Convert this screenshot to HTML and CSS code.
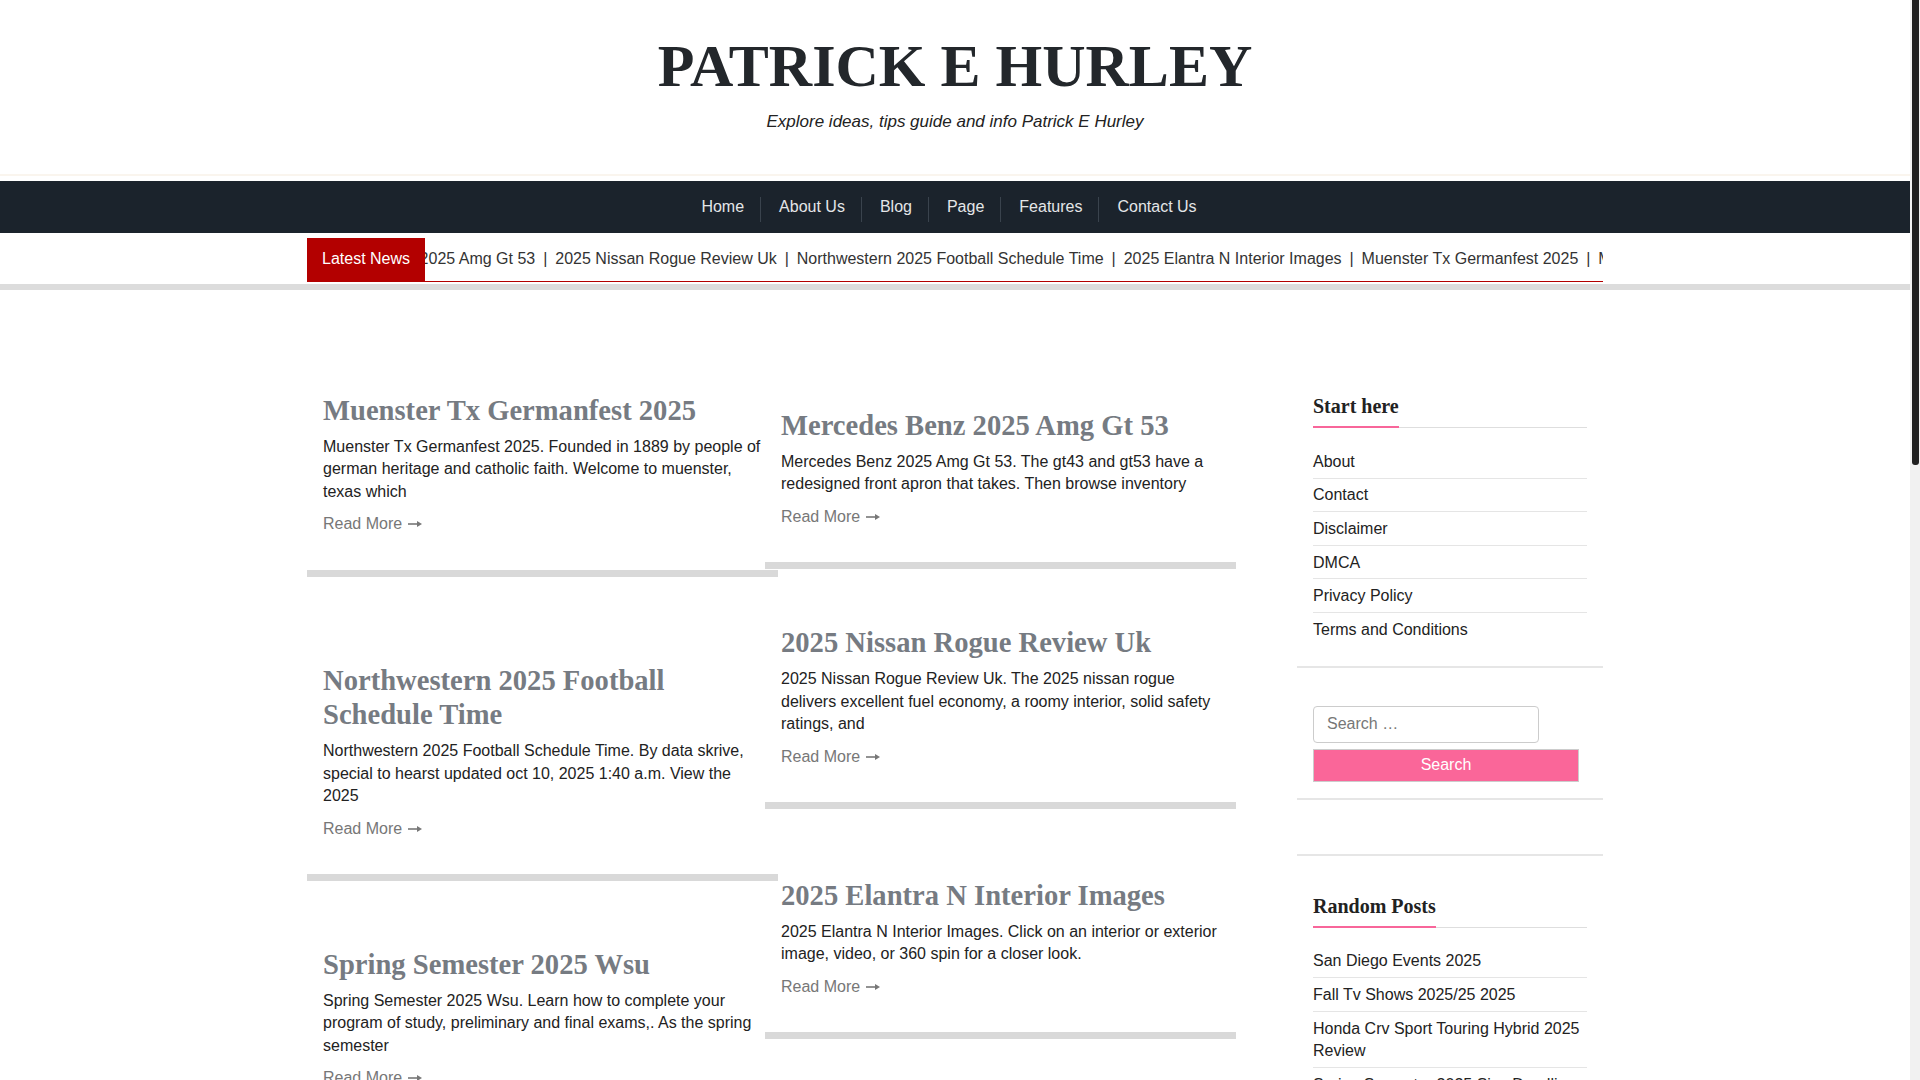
FILE: index.html
```html
<!DOCTYPE html>
<html lang="en">
<head>
<meta charset="utf-8">
<title>Patrick E Hurley</title>
<link rel="stylesheet" href="styles.css">
</head>
<body>
<div class="scrollbar" aria-hidden="true"><div class="scrollbar-thumb"></div></div>
<header class="site-header">
  <h1 class="site-title">PATRICK E HURLEY</h1>
  <p class="tagline">Explore ideas, tips guide and info Patrick E Hurley</p>
</header>
<div class="header-rule"></div>
<nav class="main-nav">
  <ul>
    <li><a href="#">Home</a></li>
    <li><a href="#">About Us</a></li>
    <li><a href="#">Blog</a></li>
    <li><a href="#">Page</a></li>
    <li><a href="#">Features</a></li>
    <li class="last"><a href="#">Contact Us</a></li>
  </ul>
</nav>
<section class="ticker-band">
  <div class="ticker">
    <span class="ticker-label">Latest News</span>
    <div class="ticker-view">
      <div class="ticker-track">Mercedes Benz 2025 Amg Gt 53 <span class="sep">|</span> 2025 Nissan Rogue Review Uk <span class="sep">|</span> Northwestern 2025 Football Schedule Time <span class="sep">|</span> 2025 Elantra N Interior Images <span class="sep">|</span> Muenster Tx Germanfest 2025 <span class="sep">|</span> Mercedes Benz 2025 Amg Gt 53</div>
    </div>
  </div>
</section>

<div class="content">
  <main class="posts">
    <div class="col">
      <article class="card">
        <div class="thumb h104"></div>
        <h2 class="post-title">Muenster Tx Germanfest 2025</h2>
        <p class="excerpt">Muenster Tx Germanfest 2025. Founded in 1889 by people of german heritage and catholic faith. Welcome to muenster, texas which</p>
        <a class="read-more" href="#">Read More <svg class="arrow" width="14" height="8" viewBox="0 0 14 8"><path d="M0 4H10" stroke="#777" stroke-width="1.6"/><path d="M9 1L14 4L9 7Z" fill="#777"/></svg></a>
      </article>
      <article class="card">
        <div class="thumb h87"></div>
        <h2 class="post-title">Northwestern 2025 Football Schedule Time</h2>
        <p class="excerpt">Northwestern 2025 Football Schedule Time. By data skrive, special to hearst updated oct 10, 2025 1:40 a.m. View the 2025</p>
        <a class="read-more" href="#">Read More <svg class="arrow" width="14" height="8" viewBox="0 0 14 8"><path d="M0 4H10" stroke="#777" stroke-width="1.6"/><path d="M9 1L14 4L9 7Z" fill="#777"/></svg></a>
      </article>
      <article class="card">
        <div class="thumb h67"></div>
        <h2 class="post-title">Spring Semester 2025 Wsu</h2>
        <p class="excerpt">Spring Semester 2025 Wsu. Learn how to complete your program of study, preliminary and final exams,. As the spring semester</p>
        <a class="read-more" href="#">Read More <svg class="arrow" width="14" height="8" viewBox="0 0 14 8"><path d="M0 4H10" stroke="#777" stroke-width="1.6"/><path d="M9 1L14 4L9 7Z" fill="#777"/></svg></a>
      </article>
      <article class="card">
        <div class="thumb h70"></div>
        <h2 class="post-title">San Diego Events 2025</h2>
        <p class="excerpt">San Diego Events 2025. Discover the best concerts, festivals and things to do in san diego this year, all in one</p>
        <a class="read-more" href="#">Read More <svg class="arrow" width="14" height="8" viewBox="0 0 14 8"><path d="M0 4H10" stroke="#777" stroke-width="1.6"/><path d="M9 1L14 4L9 7Z" fill="#777"/></svg></a>
      </article>
      <article class="card">
        <div class="thumb h70"></div>
        <h2 class="post-title">Fall Tv Shows 2025/25 2025</h2>
        <p class="excerpt">Fall Tv Shows 2025/25 2025. Here is the complete schedule of new and returning series premiering this fall season on</p>
        <a class="read-more" href="#">Read More <svg class="arrow" width="14" height="8" viewBox="0 0 14 8"><path d="M0 4H10" stroke="#777" stroke-width="1.6"/><path d="M9 1L14 4L9 7Z" fill="#777"/></svg></a>
      </article>
      <article class="card">
        <div class="thumb h70"></div>
        <h2 class="post-title">Honda Crv Sport Touring Hybrid 2025 Review</h2>
        <p class="excerpt">Honda Crv Sport Touring Hybrid 2025 Review. The top trim brings a refined cabin, strong fuel economy and plenty of</p>
        <a class="read-more" href="#">Read More <svg class="arrow" width="14" height="8" viewBox="0 0 14 8"><path d="M0 4H10" stroke="#777" stroke-width="1.6"/><path d="M9 1L14 4L9 7Z" fill="#777"/></svg></a>
      </article>
    </div>
    <div class="col col-right">
      <article class="card">
        <div class="thumb h119"></div>
        <h2 class="post-title">Mercedes Benz 2025 Amg Gt 53</h2>
        <p class="excerpt">Mercedes Benz 2025 Amg Gt 53. The gt43 and gt53 have a redesigned front apron that takes. Then browse inventory</p>
        <a class="read-more" href="#">Read More <svg class="arrow" width="14" height="8" viewBox="0 0 14 8"><path d="M0 4H10" stroke="#777" stroke-width="1.6"/><path d="M9 1L14 4L9 7Z" fill="#777"/></svg></a>
      </article>
      <article class="card">
        <div class="thumb h57"></div>
        <h2 class="post-title">2025 Nissan Rogue Review Uk</h2>
        <p class="excerpt">2025 Nissan Rogue Review Uk. The 2025 nissan rogue delivers excellent fuel economy, a roomy interior, solid safety ratings, and</p>
        <a class="read-more" href="#">Read More <svg class="arrow" width="14" height="8" viewBox="0 0 14 8"><path d="M0 4H10" stroke="#777" stroke-width="1.6"/><path d="M9 1L14 4L9 7Z" fill="#777"/></svg></a>
      </article>
      <article class="card">
        <div class="thumb h70"></div>
        <h2 class="post-title">2025 Elantra N Interior Images</h2>
        <p class="excerpt">2025 Elantra N Interior Images. Click on an interior or exterior image, video, or 360 spin for a closer look.</p>
        <a class="read-more" href="#">Read More <svg class="arrow" width="14" height="8" viewBox="0 0 14 8"><path d="M0 4H10" stroke="#777" stroke-width="1.6"/><path d="M9 1L14 4L9 7Z" fill="#777"/></svg></a>
      </article>
      <article class="card">
        <div class="thumb h70"></div>
        <h2 class="post-title">Spring Semester 2025 Sjsu</h2>
        <p class="excerpt">Spring Semester 2025 Sjsu. Check the academic calendar for registration dates, holidays and the last day of instruction</p>
        <a class="read-more" href="#">Read More <svg class="arrow" width="14" height="8" viewBox="0 0 14 8"><path d="M0 4H10" stroke="#777" stroke-width="1.6"/><path d="M9 1L14 4L9 7Z" fill="#777"/></svg></a>
      </article>
      <article class="card">
        <div class="thumb h70"></div>
        <h2 class="post-title">2025 Toyota Camry Hybrid Le</h2>
        <p class="excerpt">2025 Toyota Camry Hybrid Le. The new camry is now hybrid only, with a more efficient powertrain and updated</p>
        <a class="read-more" href="#">Read More <svg class="arrow" width="14" height="8" viewBox="0 0 14 8"><path d="M0 4H10" stroke="#777" stroke-width="1.6"/><path d="M9 1L14 4L9 7Z" fill="#777"/></svg></a>
      </article>
      <article class="card">
        <div class="thumb h70"></div>
        <h2 class="post-title">Best Family Suv 2025</h2>
        <p class="excerpt">Best Family Suv 2025. Compare space, safety and value across the most popular three row models available this year</p>
        <a class="read-more" href="#">Read More <svg class="arrow" width="14" height="8" viewBox="0 0 14 8"><path d="M0 4H10" stroke="#777" stroke-width="1.6"/><path d="M9 1L14 4L9 7Z" fill="#777"/></svg></a>
      </article>
    </div>
  </main>

  <aside class="sidebar">
    <section class="widget">
      <h3 class="widget-title"><span>Start here</span></h3>
      <ul class="widget-list">
        <li><a href="#">About</a></li>
        <li><a href="#">Contact</a></li>
        <li><a href="#">Disclaimer</a></li>
        <li><a href="#">DMCA</a></li>
        <li><a href="#">Privacy Policy</a></li>
        <li><a href="#">Terms and Conditions</a></li>
      </ul>
    </section>
    <section class="widget">
      <form class="search-form">
        <input class="search-field" type="search" placeholder="Search …">
        <button class="search-submit" type="button">Search</button>
      </form>
    </section>
    <section class="widget widget-empty"></section>
    <section class="widget">
      <h3 class="widget-title"><span>Random Posts</span></h3>
      <ul class="widget-list">
        <li><a href="#">San Diego Events 2025</a></li>
        <li><a href="#">Fall Tv Shows 2025/25 2025</a></li>
        <li><a href="#">Honda Crv Sport Touring Hybrid 2025 Review</a></li>
        <li><a href="#">Spring Semester 2025 Sjsu Deadline</a></li>
        <li><a href="#">Muenster Tx Germanfest 2025</a></li>
        <li><a href="#">2025 Nissan Rogue Review Uk</a></li>
      </ul>
    </section>
  </aside>
</div>

<footer class="site-footer">
  <p>Copyright © 2025 Patrick E Hurley. All rights reserved.</p>
</footer>
</body>
</html>
```

FILE: styles.css
```css
html {
  margin: 0;
  padding: 0;
  background: #fff;
}
body {
  margin: 0 10px 0 0;
  padding: 0;
  background: #fff;
  font-family: "Liberation Sans", Arial, sans-serif;
  color: #222;
}
a {
  text-decoration: none;
  color: inherit;
}

/* window scrollbar (drawn, since the capture hides the native one) */
.scrollbar {
  position: fixed;
  top: 0;
  right: 0;
  width: 10px;
  height: 100vh;
  background: #f1f1f1;
  z-index: 10;
}
.scrollbar-thumb {
  margin-left: 2px;
  width: 7px;
  height: 465px;
  background: #202020;
  border-radius: 0 0 3px 3px;
}

/* header */
.site-header {
  text-align: center;
  padding: 30.5px 0 40.25px;
}
.site-title {
  margin: 0;
  font-family: "Liberation Serif", "Times New Roman", serif;
  font-weight: 700;
  font-size: 60px;
  line-height: 71px;
  color: #23272b;
}
.tagline {
  margin: 7.5px 0 0;
  font-style: italic;
  font-size: 17px;
  line-height: 25.5px;
  color: #222;
}
.header-rule {
  height: 2px;
  background: #faf5ee;
  margin-top: -0.75px;
  margin-bottom: 5px;
}

/* nav */
.main-nav {
  background: #1b232c;
  height: 52px;
}
.main-nav ul {
  list-style: none;
  margin: 0;
  padding: 16px 14px 0 0;
  display: flex;
  justify-content: center;
}
.main-nav li a {
  display: block;
  padding: 0 16px 5px 18px;
  line-height: 20px;
  font-size: 16px;
  color: #e4e6e8;
  border-right: 1px solid #3a434d;
}
.main-nav li.last a {
  border-right: 0;
}

/* ticker */
.ticker-band {
  padding-top: 5px;
  border-bottom: 6px solid #dcdcdc;
}
.ticker {
  width: 1296px;
  margin: 0 auto 2px;
  height: 43px;
  position: relative;
  border-bottom: 1px solid #b30000;
}
.ticker-label {
  position: absolute;
  left: 0;
  top: 0;
  z-index: 2;
  height: 43px;
  line-height: 42px;
  padding: 0 15px;
  background: #b30000;
  color: #fff;
  font-size: 16px;
}
.ticker-view {
  overflow: hidden;
  white-space: nowrap;
  height: 43px;
  line-height: 42px;
}
.ticker-track {
  margin-left: -3px;
  font-size: 16px;
  color: #333;
}
.ticker-track .sep {
  margin: 0 3.5px;
}

/* content */
.content {
  width: 1296px;
  margin: 0 auto;
  display: flex;
  justify-content: space-between;
  align-items: flex-start;
}
.posts {
  width: 929px;
  display: flex;
  align-items: flex-start;
}
.col {
  width: 471px;
  flex: none;
}
.col-right {
  margin-left: -13px;
}
.card {
  padding: 0 15px 34px 16px;
  border-bottom: 7px solid #d9d9d9;
}
.thumb.h104 { height: 104px; }
.thumb.h119 { height: 119px; }
.thumb.h87 { height: 87px; }
.thumb.h67 { height: 67px; }
.thumb.h57 { height: 57px; }
.thumb.h70 { height: 70px; }
.post-title {
  margin: 0 0 7.5px;
  font-family: "Liberation Serif", "Times New Roman", serif;
  font-weight: 700;
  font-size: 28.6px;
  line-height: 34.56px;
  color: #767b82;
}
.excerpt {
  margin: 0 0 10px;
  font-size: 16px;
  line-height: 22.4px;
  color: #222;
}
.read-more {
  display: block;
  font-size: 16px;
  line-height: 22.4px;
  color: #777;
}
.read-more .arrow {
  vertical-align: 1px;
  margin-left: 1px;
}

/* sidebar */
.sidebar {
  width: 306px;
  padding-top: 66px;
}
.widget {
  padding: 38px 16px 16px;
  border-bottom: 2px solid #e6e6e6;
}
.widget-title {
  margin: 0 0 17px;
  font-family: "Liberation Serif", "Times New Roman", serif;
  font-weight: 700;
  font-size: 20px;
  line-height: 24px;
  color: #222;
  border-bottom: 1px solid #dedede;
}
.widget-title span {
  display: inline-block;
  padding-bottom: 8px;
  border-bottom: 2px solid #f8669a;
  margin-bottom: -1px;
}
.widget-list {
  list-style: none;
  margin: 0 0 4px;
  padding: 0;
}
.widget-list li {
  padding: 5.8px 0 4.4px;
  font-size: 16px;
  line-height: 22.4px;
  color: #222;
  border-bottom: 1px solid #e5e5e5;
}
.widget-list li:last-child {
  border-bottom: 0;
}
.search-form {
  margin: 0;
}
.search-field {
  display: block;
  box-sizing: border-box;
  width: 226px;
  height: 37px;
  margin: 0;
  padding: 0 13px;
  border: 1px solid #ccc;
  border-radius: 4px;
  font-family: "Liberation Sans", Arial, sans-serif;
  font-size: 16px;
  color: #222;
  background: #fff;
  outline: none;
}
.search-field::placeholder {
  color: #777;
}
.search-submit {
  display: block;
  box-sizing: border-box;
  width: 266px;
  height: 33px;
  margin: 6px 0 0;
  padding: 0;
  border: 1px solid #ccc;
  background: #fa6699;
  color: #fff;
  font-family: "Liberation Sans", Arial, sans-serif;
  font-size: 16px;
}

/* footer */
.site-footer {
  margin-top: 60px;
  background: #1b232c;
  color: #ccc;
  text-align: center;
  padding: 40px 0;
  font-size: 15px;
}
.site-footer p {
  margin: 0;
}
```
